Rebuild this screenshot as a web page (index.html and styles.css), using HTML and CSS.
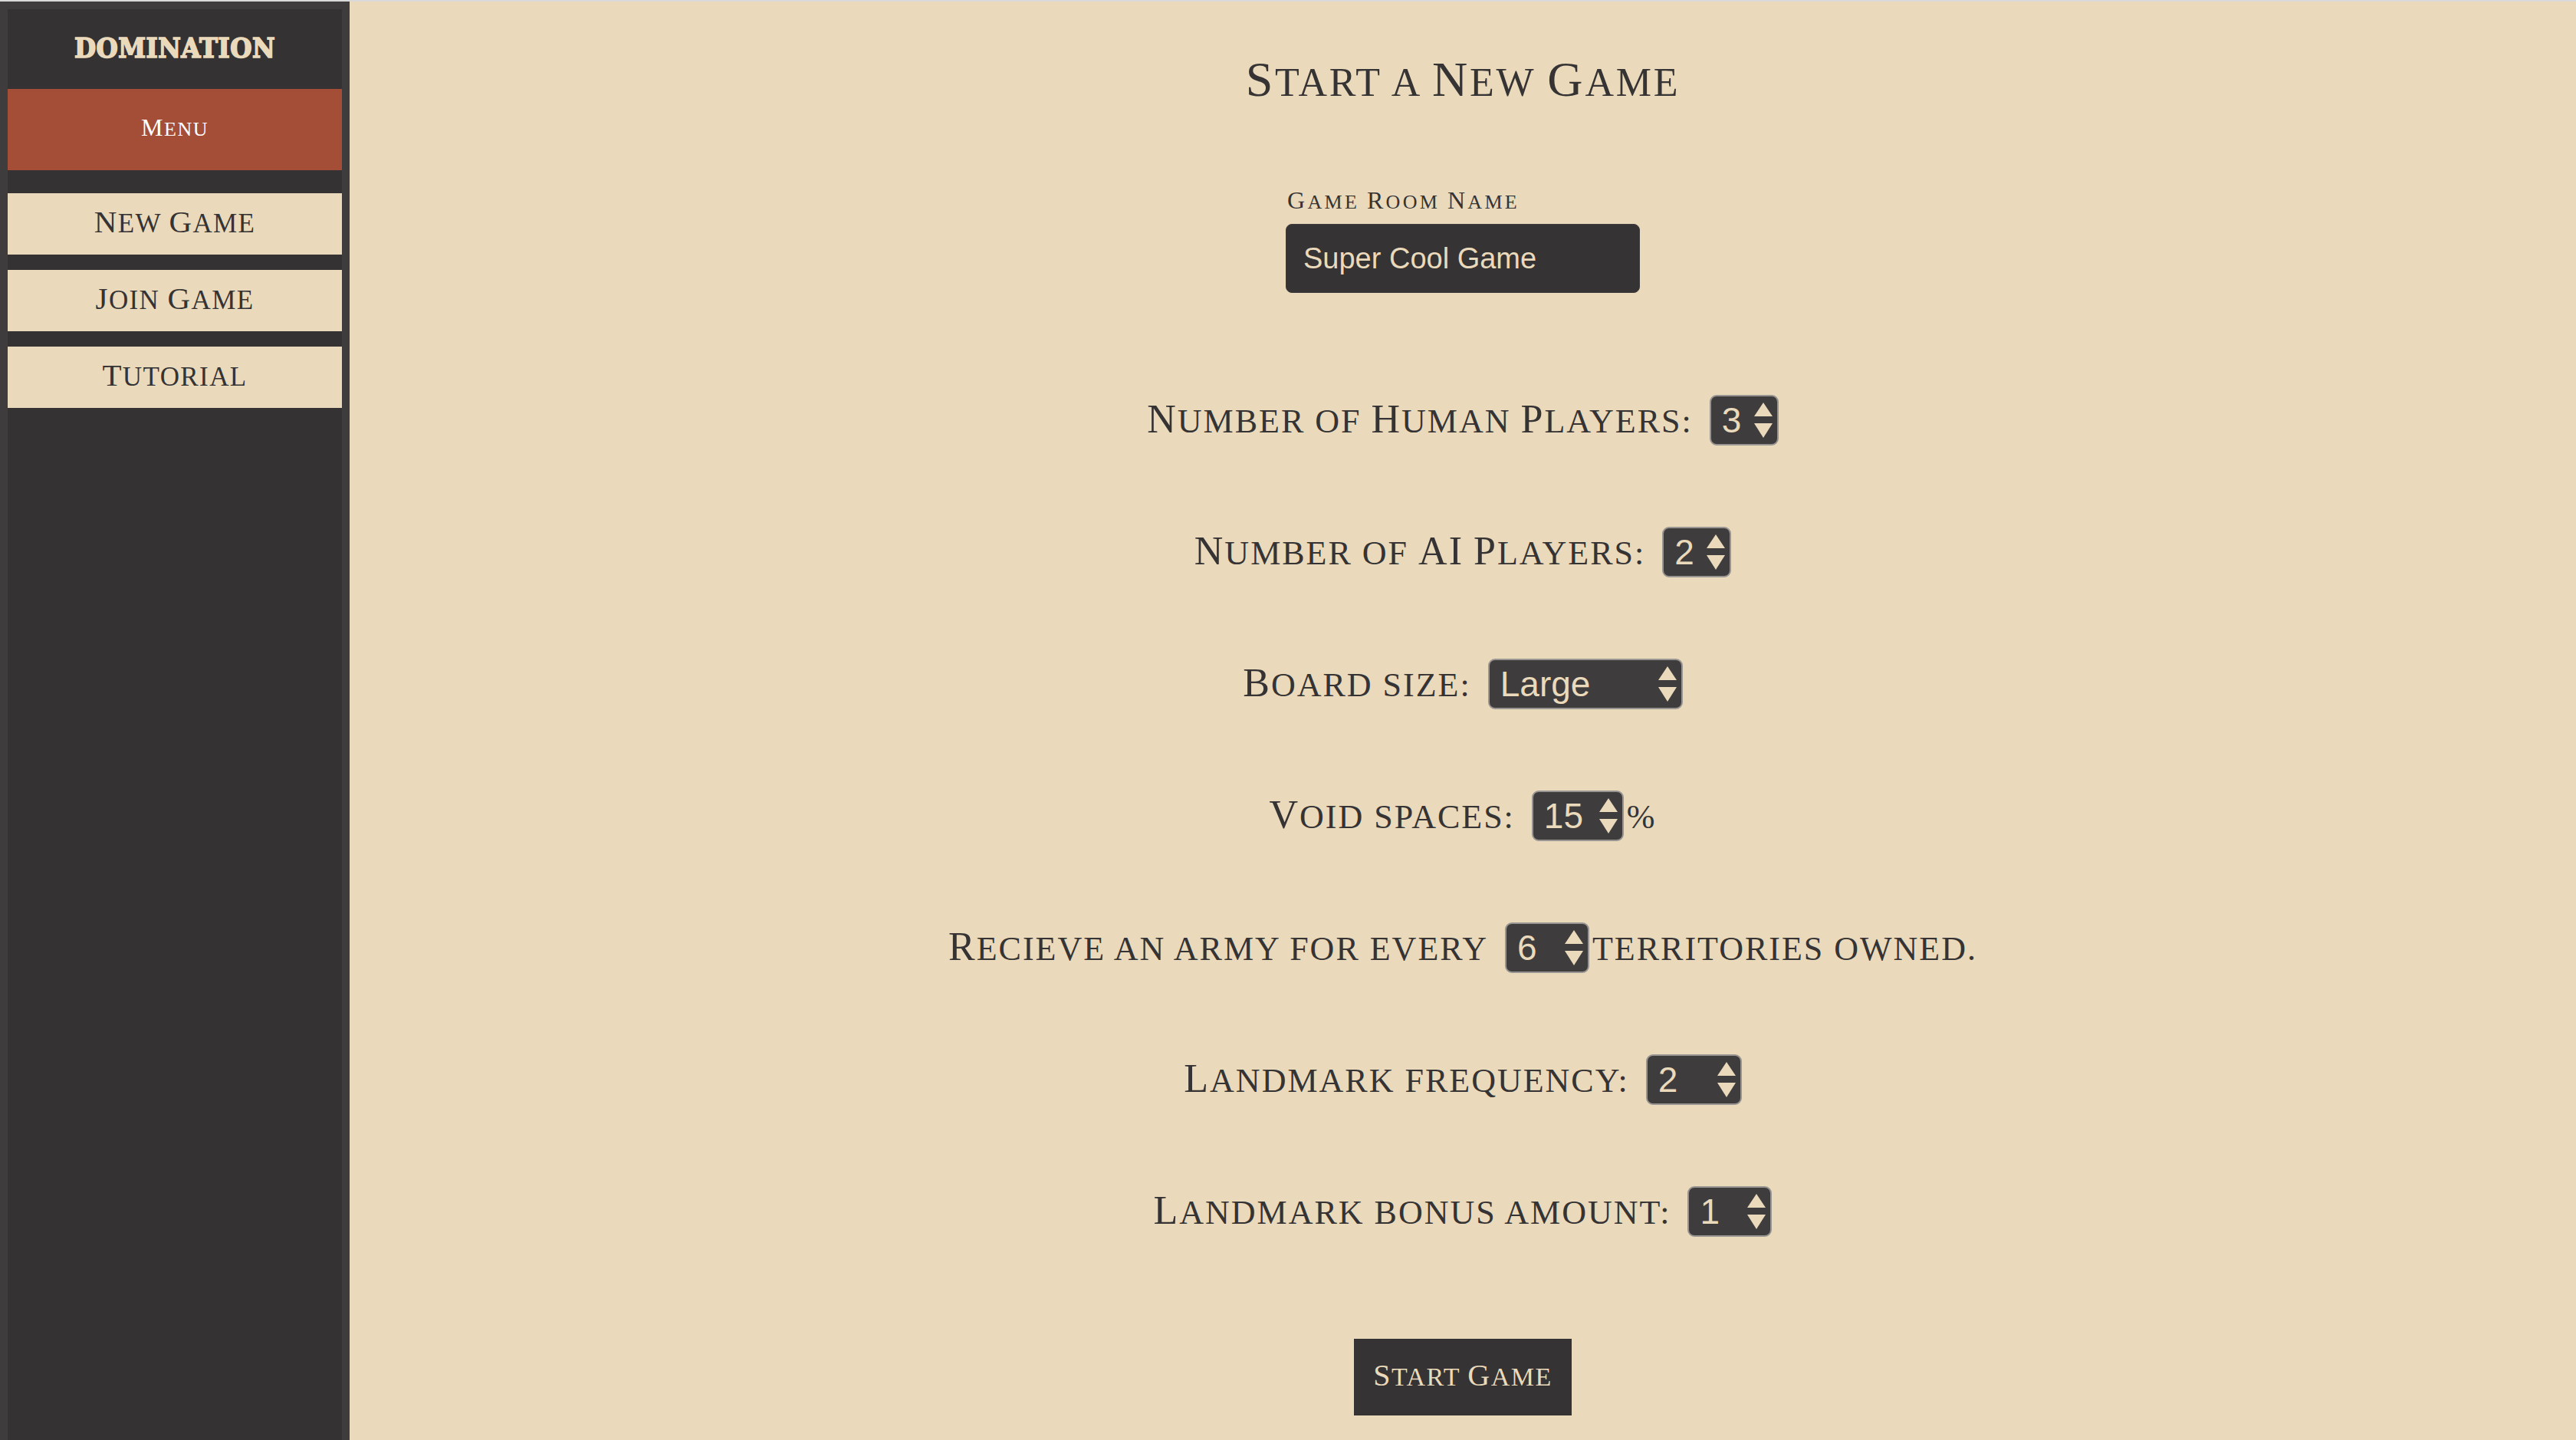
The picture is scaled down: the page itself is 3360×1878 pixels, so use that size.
FILE: index.html
```html
<!DOCTYPE html>
<html lang="en">
<head>
<meta charset="utf-8">
<title>Domination</title>
<link rel="stylesheet" href="styles.css">
</head>
<body>
<div class="app">
  <aside class="sidebar">
    <div class="sidebar-inner">
      <div class="brand">DOMINATION</div>
      <div class="menu-head"><span class="c">M</span>enu</div>
      <nav class="nav">
        <a class="nav-btn"><span class="c">N</span>ew <span class="c">G</span>ame</a>
        <a class="nav-btn"><span class="c">J</span>oin <span class="c">G</span>ame</a>
        <a class="nav-btn"><span class="c">T</span>utorial</a>
      </nav>
    </div>
  </aside>
  <main class="main">
    <h1 class="title"><span class="c">S</span>tart a <span class="c">N</span>ew <span class="c">G</span>ame</h1>
    <div class="room">
      <div class="room-label"><span class="c">G</span>ame <span class="c">R</span>oom <span class="c">N</span>ame</div>
      <div class="room-input">Super Cool Game</div>
    </div>
    <div class="options">
      <div class="row">
        <span class="lbl"><span class="c">N</span>umber of <span class="c">H</span>uman <span class="c">P</span>layers:</span>
        <span class="ctl w90"><span class="val">3</span><svg class="arrows" viewBox="0 0 24 46" width="24" height="46"><polygon points="12,0 24,18 0,18"/><polygon points="0,27 24,27 12,46"/></svg></span>
      </div>
      <div class="row">
        <span class="lbl"><span class="c">N</span>umber of <span class="c">AI</span> <span class="c">P</span>layers:</span>
        <span class="ctl w90"><span class="val">2</span><svg class="arrows" viewBox="0 0 24 46" width="24" height="46"><polygon points="12,0 24,18 0,18"/><polygon points="0,27 24,27 12,46"/></svg></span>
      </div>
      <div class="row">
        <span class="lbl"><span class="c">B</span>oard size:</span>
        <span class="ctl w254"><span class="val">Large</span><svg class="arrows" viewBox="0 0 24 46" width="24" height="46"><polygon points="12,0 24,18 0,18"/><polygon points="0,27 24,27 12,46"/></svg></span>
      </div>
      <div class="row">
        <span class="lbl"><span class="c">V</span>oid spaces:</span>
        <span class="ctl w120"><span class="val">15</span><svg class="arrows" viewBox="0 0 24 46" width="24" height="46"><polygon points="12,0 24,18 0,18"/><polygon points="0,27 24,27 12,46"/></svg></span>
        <span class="lbl after">%</span>
      </div>
      <div class="row">
        <span class="lbl"><span class="c">R</span>ecieve an army for every</span>
        <span class="ctl w110"><span class="val">6</span><svg class="arrows" viewBox="0 0 24 46" width="24" height="46"><polygon points="12,0 24,18 0,18"/><polygon points="0,27 24,27 12,46"/></svg></span>
        <span class="lbl after">territories owned.</span>
      </div>
      <div class="row">
        <span class="lbl"><span class="c">L</span>andmark frequency:</span>
        <span class="ctl w125"><span class="val">2</span><svg class="arrows" viewBox="0 0 24 46" width="24" height="46"><polygon points="12,0 24,18 0,18"/><polygon points="0,27 24,27 12,46"/></svg></span>
      </div>
      <div class="row">
        <span class="lbl"><span class="c">L</span>andmark bonus amount:</span>
        <span class="ctl w110"><span class="val">1</span><svg class="arrows" viewBox="0 0 24 46" width="24" height="46"><polygon points="12,0 24,18 0,18"/><polygon points="0,27 24,27 12,46"/></svg></span>
      </div>
    </div>
    <button class="start" type="button"><span class="c">S</span>tart <span class="c">G</span>ame</button>
  </main>
</div>
</body>
</html>
```

FILE: styles.css
```css
html, body {
  margin: 0;
  padding: 0;
  height: 100%;
}

body {
  background: #eadabb;
  font-family: "Liberation Serif", "Times New Roman", serif;
  color: #353334;
}

.app {
  display: flex;
  height: 1878px;
  box-sizing: border-box;
  border-top: 2px solid #d9d9d9;
}

.c {
  line-height: 1;
}

/* Sidebar */
.sidebar {
  width: 456px;
  flex: none;
  box-sizing: border-box;
  background: #3e3c3d;
  padding: 10px 10px 0 10px;
  display: flex;
}

.sidebar-inner {
  flex: 1;
  background: #343233;
  display: flex;
  flex-direction: column;
}

.brand {
  height: 104px;
  line-height: 100px;
  text-align: center;
  font-family: "DejaVu Serif Condensed", "DejaVu Serif", serif;
  font-stretch: condensed;
  font-weight: 900;
  font-size: 36px;
  color: #eadabb;
  letter-spacing: 0.5px;
  -webkit-text-stroke: 1.6px #eadabb;
}

.menu-head {
  height: 106px;
  line-height: 106px;
  background: #a44e37;
  color: #ffffff;
  text-align: center;
  text-transform: uppercase;
  font-size: 26px;
  letter-spacing: 1.5px;
}

.menu-head .c {
  font-size: 32px;
}

.nav {
  display: flex;
  flex-direction: column;
  gap: 20px;
  margin-top: 30px;
}

.nav-btn {
  display: block;
  height: 80px;
  line-height: 80px;
  background: #eadabb;
  color: #353334;
  text-align: center;
  text-transform: uppercase;
  font-size: 35px;
  letter-spacing: 1.4px;
}

.nav-btn .c {
  font-size: 41px;
}

/* Main */
.main {
  flex: 1;
  display: flex;
  flex-direction: column;
  align-items: center;
  padding-top: 66px;
}

.title {
  margin: 0;
  height: 80px;
  line-height: 80px;
  font-weight: normal;
  text-transform: uppercase;
  font-size: 52px;
  letter-spacing: 2.8px;
}

.title .c {
  font-size: 64px;
}

.room {
  width: 462px;
  margin-top: 96px;
}

.room-label {
  height: 40px;
  line-height: 40px;
  text-transform: uppercase;
  font-size: 26px;
  letter-spacing: 3.3px;
  padding-left: 2px;
}

.room-label .c {
  font-size: 32px;
}

.room-input {
  margin-top: 8px;
  height: 90px;
  box-sizing: border-box;
  background: #353334;
  border: 1px solid #3e3c3d;
  border-radius: 8px;
  padding-left: 22px;
  display: flex;
  align-items: center;
  font-family: "Liberation Sans", Arial, sans-serif;
  font-size: 38px;
  color: #eadabb;
}

.options {
  margin-top: 133px;
  display: flex;
  flex-direction: column;
  align-items: center;
  gap: 106px;
}

.row {
  height: 66px;
  display: flex;
  align-items: center;
  justify-content: center;
}

.lbl {
  display: block;
  height: 66px;
  box-sizing: border-box;
  padding-top: 4px;
  line-height: 62px;
  text-transform: uppercase;
  font-size: 44px;
  letter-spacing: 2px;
  white-space: pre;
}

.lbl .c {
  font-size: 52px;
}

.lbl.after {
  margin-left: 4px;
}

.ctl {
  margin-left: 22px;
  height: 66px;
  box-sizing: border-box;
  display: flex;
  align-items: center;
  justify-content: space-between;
  background: #3e3c3d;
  border: 2px solid #979491;
  border-radius: 9px;
  padding: 0 6px 0 14px;
  font-family: "Liberation Sans", Arial, sans-serif;
  font-size: 46px;
  color: #eadabb;
}

.val {
  line-height: 1;
}

.arrows {
  display: block;
  fill: #eadabb;
}

.w90 { width: 90px; }
.w110 { width: 110px; }
.w120 { width: 120px; }
.w125 { width: 125px; }
.w254 { width: 254px; }

.start {
  margin-top: 133px;
  width: 284px;
  height: 100px;
  padding: 0;
  border: none;
  background: #353334;
  color: #eadabb;
  font-family: "Liberation Serif", "Times New Roman", serif;
  text-transform: uppercase;
  font-size: 34px;
  line-height: 100px;
  letter-spacing: 1.5px;
  text-align: center;
}

.start .c {
  font-size: 40px;
}
```
